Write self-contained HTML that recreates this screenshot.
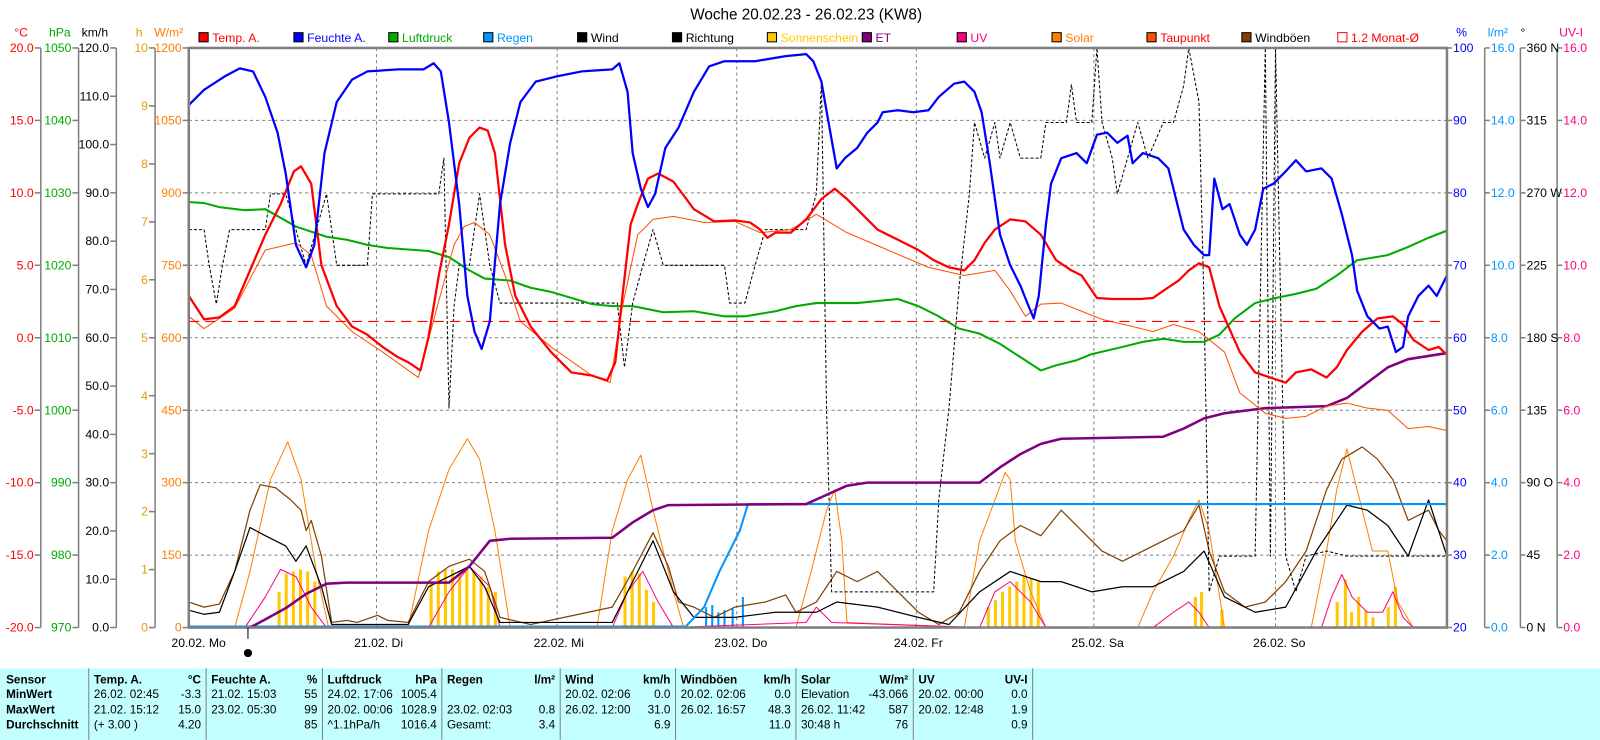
<!DOCTYPE html>
<html><head><meta charset="utf-8"><style>
html,body{margin:0;padding:0;background:#fff;width:1600px;height:740px;overflow:hidden}
svg{display:block}
text{font-family:"Liberation Sans",sans-serif;font-size:12px}
.t text{font-size:11.5px}
</style></head><body>
<svg width="1600" height="740" viewBox="0 0 1568 725.2" preserveAspectRatio="none" xmlns="http://www.w3.org/2000/svg">
<text x="790" y="19" text-anchor="middle" style="font-size:15px">Woche 20.02.23 - 26.02.23 (KW8)</text>
<!-- legend -->
<g>
<rect x="195" y="32" width="9" height="9" fill="#f00" stroke="#000"/><text x="208" y="41" fill="#f00">Temp. A.</text>
<rect x="288" y="32" width="9" height="9" fill="#00f" stroke="#000"/><text x="301" y="41" fill="#00f">Feuchte A.</text>
<rect x="381" y="32" width="9" height="9" fill="#0a0" stroke="#000"/><text x="394" y="41" fill="#0a0">Luftdruck</text>
<rect x="474" y="32" width="9" height="9" fill="#0096ff" stroke="#000"/><text x="487" y="41" fill="#0096ff">Regen</text>
<rect x="566" y="32" width="9" height="9" fill="#000" stroke="#000"/><text x="579" y="41">Wind</text>
<rect x="659" y="32" width="9" height="9" fill="#000" stroke="#000"/><text x="672" y="41">Richtung</text>
<rect x="752" y="32" width="9" height="9" fill="#ffc800" stroke="#000"/><text x="765" y="41" fill="#ffc800">Sonnenschein</text>
<rect x="845" y="32" width="9" height="9" fill="#800080" stroke="#000"/><text x="858" y="41" fill="#800080">ET</text>
<rect x="938" y="32" width="9" height="9" fill="#ff0080" stroke="#000"/><text x="951" y="41" fill="#ff0080">UV</text>
<rect x="1031" y="32" width="9" height="9" fill="#ff8000" stroke="#000"/><text x="1044" y="41" fill="#ff8000">Solar</text>
<rect x="1124" y="32" width="9" height="9" fill="#ff5000" stroke="#000"/><text x="1137" y="41" fill="#f00">Taupunkt</text>
<rect x="1217" y="32" width="9" height="9" fill="#804000" stroke="#000"/><text x="1230" y="41">Windböen</text>
<rect x="1311" y="32" width="9" height="9" fill="none" stroke="#f00"/><text x="1324" y="41" fill="#f00">1.2 Monat-Ø</text>
</g>
<!-- unit headers -->
<text x="14" y="36" fill="#f00">°C</text><text x="48" y="36" fill="#0a0">hPa</text><text x="80" y="36">km/h</text>
<text x="133" y="36" fill="#e0a000">h</text><text x="151" y="36" fill="#ff8000">W/m²</text>
<text x="1427" y="36" fill="#00f">%</text><text x="1458" y="36" fill="#0096ff">l/m²</text><text x="1490" y="36">°</text><text x="1528" y="36" fill="#ff0080">UV-I</text>
<!-- axis lines -->
<g stroke="#808080" stroke-width="1.5">
<line x1="40" y1="47" x2="40" y2="615"/><line x1="77" y1="47" x2="77" y2="615"/><line x1="114" y1="47" x2="114" y2="615"/><line x1="152" y1="47" x2="152" y2="615"/>
<line x1="1455" y1="47" x2="1455" y2="615"/><line x1="1490" y1="47" x2="1490" y2="615"/><line x1="1526" y1="47" x2="1526" y2="615"/>
</g>
<g id="ax" font-size="12"></g>
<!-- grid -->
<g stroke="#808080" stroke-dasharray="3,3" stroke-width="1">
<line x1="185" y1="118" x2="1418" y2="118"/><line x1="185" y1="189" x2="1418" y2="189"/><line x1="185" y1="260" x2="1418" y2="260"/><line x1="185" y1="331" x2="1418" y2="331"/><line x1="185" y1="402" x2="1418" y2="402"/><line x1="185" y1="473" x2="1418" y2="473"/><line x1="185" y1="544" x2="1418" y2="544"/>
<line x1="369" y1="47" x2="369" y2="615"/><line x1="546" y1="47" x2="546" y2="615"/><line x1="722" y1="47" x2="722" y2="615"/><line x1="898" y1="47" x2="898" y2="615"/><line x1="1072" y1="47" x2="1072" y2="615"/><line x1="1250" y1="47" x2="1250" y2="615"/>
</g>
<!-- sunshine bars -->
<g fill="#ffc800">
<rect x="272" y="580" width="3" height="35"/><rect x="279" y="562" width="3" height="53"/><rect x="286" y="560" width="3" height="55"/><rect x="293" y="558" width="3" height="57"/><rect x="300" y="560" width="3" height="55"/><rect x="307" y="570" width="3" height="45"/>
<rect x="421" y="570" width="3" height="45"/><rect x="428" y="560" width="3" height="55"/><rect x="435" y="558" width="3" height="57"/><rect x="442" y="558" width="3" height="57"/><rect x="449" y="560" width="3" height="55"/><rect x="456" y="556" width="3" height="59"/><rect x="463" y="560" width="3" height="55"/><rect x="470" y="565" width="3" height="50"/><rect x="477" y="575" width="3" height="40"/><rect x="484" y="580" width="3" height="35"/>
<rect x="611" y="565" width="3" height="50"/><rect x="618" y="560" width="3" height="55"/><rect x="625" y="562" width="3" height="53"/><rect x="632" y="578" width="3" height="37"/><rect x="639" y="590" width="3" height="25"/>
<rect x="967" y="595" width="3" height="20"/><rect x="974" y="588" width="3" height="27"/><rect x="981" y="580" width="3" height="35"/><rect x="988" y="575" width="3" height="40"/><rect x="995" y="570" width="3" height="45"/><rect x="1002" y="565" width="3" height="50"/><rect x="1009" y="567" width="3" height="48"/><rect x="1016" y="570" width="3" height="45"/>
<rect x="1170" y="585" width="3" height="30"/><rect x="1176" y="580" width="3" height="35"/><rect x="1196" y="598" width="3" height="17"/>
<rect x="1309" y="590" width="3" height="25"/><rect x="1317" y="568" width="3" height="47"/><rect x="1323" y="600" width="3" height="15"/><rect x="1330" y="585" width="3" height="30"/><rect x="1337" y="598" width="3" height="17"/><rect x="1344" y="605" width="3" height="10"/><rect x="1359" y="595" width="3" height="20"/><rect x="1366" y="575" width="3" height="40"/>
</g>
<g fill="#0096ff"><rect x="691" y="595" width="2" height="20"/><rect x="697" y="593" width="2" height="22"/><rect x="703" y="600" width="2" height="15"/><rect x="709" y="598" width="2" height="17"/><rect x="717" y="596" width="2" height="19"/><rect x="727" y="585" width="2" height="30"/></g>
<g fill="none" stroke-linejoin="round">
<!-- solar -->
<polyline stroke="#ff8000" stroke-width="1" points="185,615 230,615 245,560 265,470 282,433 295,470 310,560 322,615 400,615 420,520 440,460 458,430 470,450 485,520 500,615 585,615 600,520 615,470 628,446 640,500 660,580 670,615 780,615 795,560 810,500 818,480 825,530 830,610 945,615 960,530 975,490 985,463 990,470 995,530 1010,580 1025,615 1115,615 1130,580 1150,545 1165,510 1175,490 1185,520 1200,615 1285,615 1300,540 1310,480 1320,440 1330,480 1345,540 1360,540 1370,590 1385,615 1418,615"/>
<!-- UV -->
<polyline stroke="#ff0080" stroke-width="1" points="185,615 240,615 260,585 275,558 290,565 305,595 320,615 420,615 440,580 460,555 480,575 490,615 600,615 615,580 630,560 645,590 660,615 790,610 800,595 815,610 960,615 975,580 990,570 1010,590 1025,615 1130,615 1150,600 1165,590 1175,600 1185,615 1295,615 1305,585 1315,563 1325,585 1340,600 1355,600 1365,580 1375,605 1385,615"/>
<!-- gusts -->
<polyline stroke="#804000" stroke-width="1.2" points="185,590 200,595 215,592 230,560 245,500 255,475 270,478 285,490 295,500 300,520 305,510 315,545 325,610 340,608 350,610 370,603 380,608 400,610 420,570 440,555 460,548 475,560 490,605 520,612 600,595 620,560 640,522 655,555 665,590 680,595 700,605 720,595 750,590 770,583 780,600 800,590 820,560 840,570 860,560 880,580 900,600 920,612 940,600 960,560 980,530 1000,515 1020,525 1040,500 1060,520 1080,540 1100,550 1120,540 1140,530 1160,520 1175,495 1185,540 1200,580 1220,595 1240,590 1260,570 1280,540 1300,480 1315,450 1335,438 1350,450 1365,470 1380,510 1400,500 1410,520 1418,530"/>
<!-- wind -->
<polyline stroke="#000" stroke-width="1.2" points="185,598 200,602 215,600 230,560 245,517 260,525 280,535 290,550 300,535 315,575 325,612 400,612 420,575 440,565 460,555 475,575 490,610 600,610 620,570 640,530 660,580 680,605 720,605 760,600 800,600 820,590 860,595 900,605 930,612 960,580 990,560 1020,570 1040,570 1070,580 1100,575 1130,575 1160,560 1180,540 1200,585 1230,600 1260,595 1290,540 1320,495 1340,500 1360,515 1380,545 1400,490 1418,545"/>
<!-- direction -->
<polyline stroke="#000" stroke-width="1" stroke-dasharray="3,2" points="185,225 200,225 205,260 212,298 218,260 225,225 260,225 265,190 280,190 290,225 300,260 310,225 320,190 330,260 360,260 365,190 370,190 380,190 430,190 435,155 440,400 445,300 450,260 460,260 470,190 480,260 490,297 500,297 605,297 612,360 620,297 630,260 640,225 650,260 700,260 710,260 715,297 730,297 740,260 750,225 760,225 790,225 800,190 805,80 810,400 815,580 900,580 915,580 920,490 930,400 940,280 950,190 955,120 965,155 975,120 980,155 990,120 1000,155 1020,155 1025,120 1045,120 1050,83 1055,120 1070,120 1075,47 1080,120 1090,155 1095,190 1105,155 1115,120 1125,155 1140,120 1150,120 1160,84 1165,47 1175,100 1180,300 1185,580 1195,545 1230,545 1240,47 1245,545 1250,47 1260,545 1270,580 1280,545 1300,540 1320,545 1418,545"/>
<!-- rain -->
<polyline stroke="#0096ff" stroke-width="2" points="185,614 672,614 690,595 705,560 715,540 725,520 733,494 1418,494"/>
<!-- ET -->
<polyline stroke="#800080" stroke-width="2.5" points="245,615 260,607 280,596 300,582 320,572 340,571 440,571 460,555 480,530 500,528 600,527 620,512 640,500 655,495 790,494 810,485 830,476 850,473 960,473 980,458 1000,445 1020,435 1040,430 1140,428 1160,420 1180,410 1200,405 1240,400 1300,398 1320,390 1340,375 1360,360 1380,352 1418,346"/>
<!-- pressure -->
<polyline stroke="#00aa00" stroke-width="2" points="185,198 200,199 215,203 240,206 260,205 290,222 320,232 340,235 360,240 380,243 420,246 440,252 460,265 475,273 500,275 520,282 540,286 560,292 580,298 600,300 620,300 650,306 680,305 710,310 730,310 760,305 780,300 800,297 840,297 880,293 900,300 920,310 940,322 960,327 980,337 1000,350 1020,363 1035,358 1055,353 1070,347 1100,340 1120,335 1140,332 1160,335 1180,335 1195,328 1210,312 1230,297 1250,292 1270,288 1290,283 1310,270 1330,255 1360,250 1380,242 1400,233 1418,226"/>
<!-- dewpoint -->
<polyline stroke="#ff5000" stroke-width="1" points="185,310 200,322 230,302 260,245 290,238 305,250 320,300 345,325 375,345 410,370 430,295 445,240 455,222 465,218 480,230 495,270 510,315 540,340 580,368 598,375 610,300 625,230 640,215 660,212 690,218 720,217 745,228 775,225 800,210 830,228 870,245 910,262 945,270 975,265 990,285 1005,310 1020,298 1040,297 1060,305 1080,313 1110,320 1130,325 1150,318 1175,325 1200,345 1215,385 1240,405 1260,410 1280,408 1300,398 1320,395 1340,400 1360,402 1380,420 1400,418 1418,422"/>
<!-- monthly avg -->
<line x1="185" y1="315" x2="1418" y2="315" stroke="#f00" stroke-width="1.2" stroke-dasharray="10,6"/>
<!-- temp -->
<polyline stroke="#f00" stroke-width="2.2" points="185,290 200,313 215,311 230,300 245,265 260,230 275,200 288,168 295,163 305,180 315,260 330,300 345,320 360,328 375,340 390,350 400,355 412,363 420,330 430,270 440,220 450,160 460,135 470,125 478,128 485,150 495,240 505,290 520,320 540,345 560,365 580,368 595,373 603,355 610,290 618,220 625,200 635,175 645,170 660,178 680,205 700,217 720,216 735,218 745,225 752,233 760,228 775,228 790,215 805,195 818,185 830,195 845,210 860,225 880,235 900,245 915,255 930,262 945,265 955,255 965,238 975,225 990,215 1005,217 1020,230 1035,255 1050,265 1060,270 1075,292 1090,293 1118,293 1130,292 1140,285 1155,275 1165,265 1175,258 1185,262 1195,300 1215,345 1230,365 1245,370 1260,375 1270,365 1285,362 1300,370 1310,360 1320,343 1335,325 1350,312 1365,310 1375,318 1385,333 1400,343 1410,340 1418,348"/>
<!-- humidity -->
<polyline stroke="#0000ff" stroke-width="2.2" points="185,103 200,88 220,75 235,67 248,70 260,95 272,130 280,170 290,240 300,262 308,240 318,150 330,100 345,78 360,70 390,68 415,68 425,62 432,70 440,120 450,200 458,290 465,325 472,342 480,315 490,200 500,140 510,100 525,80 545,75 570,70 600,68 607,62 615,90 620,150 628,185 635,203 642,190 652,145 665,125 680,90 695,65 710,60 740,60 770,55 790,53 797,60 805,80 812,120 820,165 828,155 840,145 850,130 860,120 865,110 880,108 895,110 910,108 920,95 935,82 945,80 955,90 962,110 970,160 980,230 990,260 1000,280 1008,300 1013,312 1018,290 1025,220 1030,180 1040,155 1055,150 1065,160 1075,132 1085,130 1095,140 1105,133 1110,160 1120,150 1135,155 1145,165 1150,185 1160,225 1170,240 1180,250 1185,250 1190,175 1198,205 1205,200 1215,230 1222,240 1230,225 1238,185 1248,180 1258,170 1270,157 1280,168 1295,165 1305,175 1315,210 1325,250 1330,285 1340,310 1352,322 1360,320 1368,345 1375,340 1380,310 1390,290 1400,280 1408,290 1418,270"/>
</g>
<!-- plot border -->
<rect x="185" y="47" width="1233" height="568" fill="none" stroke="#808080" stroke-width="2.5"/>
<line x1="243" y1="615" x2="243" y2="626" stroke="#000"/>
<circle cx="243" cy="640" r="4" fill="#000"/>
<g font-size="12">
<text x="168" y="634">20.02.  Mo</text><text x="347" y="634">21.02.  Di</text><text x="523" y="634">22.02.  Mi</text><text x="700" y="634">23.02.  Do</text><text x="876" y="634">24.02.  Fr</text><text x="1050" y="634">25.02.  Sa</text><text x="1228" y="634">26.02.  So</text>
</g>
<!-- table -->
<rect x="0" y="655" width="1568" height="71" fill="#c4ffff"/>
<g stroke="#808080"><line x1="87" y1="655" x2="87" y2="725"/><line x1="202" y1="655" x2="202" y2="725"/><line x1="316" y1="655" x2="316" y2="725"/><line x1="433" y1="655" x2="433" y2="725"/><line x1="549" y1="655" x2="549" y2="725"/><line x1="662" y1="655" x2="662" y2="725"/><line x1="780" y1="655" x2="780" y2="725"/><line x1="895" y1="655" x2="895" y2="725"/><line x1="1012" y1="655" x2="1012" y2="725"/></g>
<g class="t" id="tbl"></g>
<script>
(function(){
var ns="http://www.w3.org/2000/svg";
function T(g,x,y,s,fill,anchor,bold){var e=document.createElementNS(ns,"text");e.setAttribute("x",x);e.setAttribute("y",y);if(fill)e.setAttribute("fill",fill);if(anchor)e.setAttribute("text-anchor",anchor);if(bold)e.setAttribute("font-weight","bold");e.textContent=s;g.appendChild(e);}
function L(g,x1,y1,x2,y2){var e=document.createElementNS(ns,"line");e.setAttribute("x1",x1);e.setAttribute("y1",y1);e.setAttribute("x2",x2);e.setAttribute("y2",y2);e.setAttribute("stroke","#808080");e.setAttribute("stroke-width","1.5");g.appendChild(e);}
var ax=document.getElementById("ax");
function left(line,vals,col){var n=vals.length-1;for(var i=0;i<=n;i++){var y=47+568*i/n;L(ax,line-6,y,line,y);T(ax,line-7,y+4,vals[i],col,"end");}}
function right(line,vals,col){var n=vals.length-1;for(var i=0;i<=n;i++){var y=47+568*i/n;L(ax,line,y,line+5,y);T(ax,line+6,y+4,vals[i],col);}}
left(40,["20.0","15.0","10.0","5.0","0.0","-5.0","-10.0","-15.0","-20.0"],"#f00");
left(77,["1050","1040","1030","1020","1010","1000","990","980","970"],"#0a0");
var k=[];for(var v=120;v>=0;v-=10)k.push(v.toFixed(1));left(114,k,"#000");
var h=[];for(var v=10;v>=0;v--)h.push(""+v);left(152,h,"#e0a000");
left(185,["1200","1050","900","750","600","450","300","150","0"],"#ff8000");
right(1418,["100","90","80","70","60","50","40","30","20"],"#00f");
var r=[];for(var v=16;v>=0;v-=2)r.push(v.toFixed(1));right(1455,r,"#0096ff");
right(1490,["360 N","315","270 W","225","180 S","135","90  O","45","0    N"],"#000");
right(1526,r,"#ff0080");
var tb=document.getElementById("tbl");
var ys=[670,684,699,714];
T(tb,6,ys[0],"Sensor",0,0,1);T(tb,6,ys[1],"MinWert",0,0,1);T(tb,6,ys[2],"MaxWert",0,0,1);T(tb,6,ys[3],"Durchschnitt",0,0,1);
var cols=[[87,202,["Temp. A.","°C"],[["26.02.  02:45","-3.3"],["21.02.  15:12","15.0"],[" (+ 3.00 )","4.20"]]],
[202,316,["Feuchte A.","%"],[["21.02.  15:03","55"],["23.02.  05:30","99"],["","85"]]],
[316,433,["Luftdruck","hPa"],[["24.02.  17:06","1005.4"],["20.02.  00:06","1028.9"],["^1.1hPa/h","1016.4"]]],
[433,549,["Regen","l/m²"],[["",""],["23.02.  02:03","0.8"],["Gesamt:","3.4"]]],
[549,662,["Wind","km/h"],[["20.02.  02:06","0.0"],["26.02.  12:00","31.0"],["","6.9"]]],
[662,780,["Windböen","km/h"],[["20.02.  02:06","0.0"],["26.02.  16:57","48.3"],["","11.0"]]],
[780,895,["Solar","W/m²"],[["Elevation","-43.066"],["26.02.  11:42","587"],["30:48 h","76"]]],
[895,1012,["UV","UV-I"],[["20.02.  00:00","0.0"],["20.02.  12:48","1.9"],["","0.9"]]]];
cols.forEach(function(c){T(tb,c[0]+5,ys[0],c[2][0],0,0,1);T(tb,c[1]-5,ys[0],c[2][1],0,"end",1);
c[3].forEach(function(rw,i){T(tb,c[0]+5,ys[i+1],rw[0]);T(tb,c[1]-5,ys[i+1],rw[1],0,"end");});});
})();
</script>
</svg>
</body></html>
